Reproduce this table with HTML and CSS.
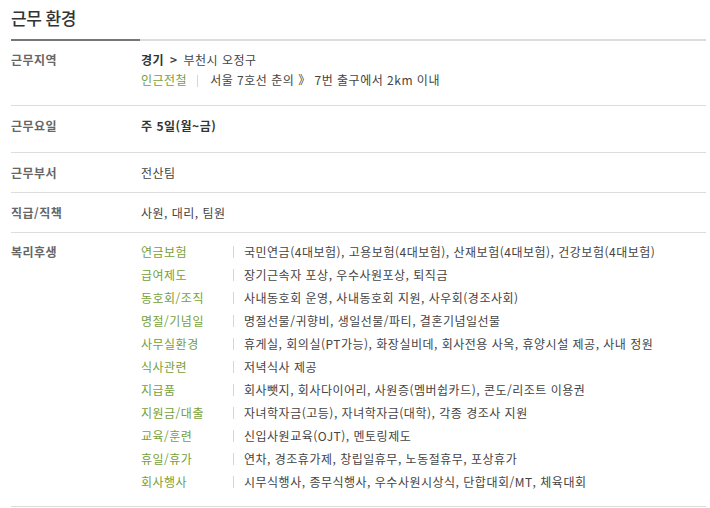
FILE: index.html
```html
<!DOCTYPE html>
<html lang="ko">
<head>
<meta charset="utf-8">
<link rel="stylesheet" href="styles.css">
</head>
<body>
<section class="env">
  <h2 class="env-title">근무 환경</h2>
  <div class="row row-tall">
    <div class="label">근무지역</div>
    <div class="value">
      <div class="line"><b class="strong">경기</b> <b class="arrow">&gt;</b> 부천시 오정구</div>
      <div class="line"><span class="green">인근전철</span><span class="bar"></span>서울 7호선 춘의 》 7번 출구에서 2km 이내</div>
    </div>
  </div>
  <div class="row row-tall2">
    <div class="label">근무요일</div>
    <div class="value"><b class="strong">주 5일(월~금)</b></div>
  </div>
  <div class="row">
    <div class="label">근무부서</div>
    <div class="value">전산팀</div>
  </div>
  <div class="row">
    <div class="label">직급/직책</div>
    <div class="value">사원, 대리, 팀원</div>
  </div>
  <div class="row row-benefit">
    <div class="label">복리후생</div>
    <dl class="benefits">
      <div class="b-item"><dt>연금보험</dt><dd>국민연금(4대보험), 고용보험(4대보험), 산재보험(4대보험), 건강보험(4대보험)</dd></div>
      <div class="b-item"><dt>급여제도</dt><dd>장기근속자 포상, 우수사원포상, 퇴직금</dd></div>
      <div class="b-item"><dt>동호회/조직</dt><dd>사내동호회 운영, 사내동호회 지원, 사우회(경조사회)</dd></div>
      <div class="b-item"><dt>명절/기념일</dt><dd>명절선물/귀향비, 생일선물/파티, 결혼기념일선물</dd></div>
      <div class="b-item"><dt>사무실환경</dt><dd>휴게실, 회의실(PT가능), 화장실비데, 회사전용 사옥, 휴양시설 제공, 사내 정원</dd></div>
      <div class="b-item"><dt>식사관련</dt><dd>저녁식사 제공</dd></div>
      <div class="b-item"><dt>지급품</dt><dd>회사뺏지, 회사다이어리, 사원증(멤버쉽카드), 콘도/리조트 이용권</dd></div>
      <div class="b-item"><dt>지원금/대출</dt><dd>자녀학자금(고등), 자녀학자금(대학), 각종 경조사 지원</dd></div>
      <div class="b-item"><dt>교육/훈련</dt><dd>신입사원교육(OJT), 멘토링제도</dd></div>
      <div class="b-item"><dt>휴일/휴가</dt><dd>연차, 경조휴가제, 창립일휴무, 노동절휴무, 포상휴가</dd></div>
      <div class="b-item"><dt>회사행사</dt><dd>시무식행사, 종무식행사, 우수사원시상식, 단합대회/MT, 체육대회</dd></div>
    </dl>
  </div>
</section>
</body>
</html>
```
FILE: styles.css
```css
* { box-sizing: border-box; }
html, body {
  margin: 0;
  padding: 0;
  background: #fff;
}
body {
  font-family: "Noto Sans CJK KR", "Noto Sans", sans-serif;
  font-size: 12px;
  color: #444;
}
.env {
  width: 695px;
  margin-left: 11px;
}
.env-title {
  margin: 0;
  height: 41px;
  padding-top: 6px;
  font-size: 17px;
  font-weight: 500;
  color: #333;
  line-height: 24px;
  letter-spacing: -0.5px;
  border-bottom: 2px solid #ddd;
  position: relative;
}
.env-title::after {
  content: "";
  position: absolute;
  left: 0;
  bottom: -2px;
  width: 129px;
  height: 2px;
  background: #767676;
}
.row {
  display: flex;
  border-bottom: 1px solid #ddd;
  padding: 9px 0 8px;
  line-height: 22px;
  letter-spacing: 0.5px;
}
.row-tall { padding: 9px 0 15px; line-height: 20px; }
.row-tall2 { padding: 9px 0 15px; }
.row-benefit { padding: 7px 0 13px; line-height: 23px; }
.label {
  width: 130px;
  flex: none;
  font-weight: 700;
  color: #666;
}
.value { color: #444; }
.strong { font-weight: 700; color: #333; }
.arrow { font-weight: 700; color: #444; margin: 0 2px; }
.green { color: #76a03a; }
.bar {
  display: inline-block;
  width: 1px;
  height: 12px;
  background: #d6d6d6;
  margin: 0 12px 0 10px;
  vertical-align: -2px;
}
.benefits { margin: 0; }
.b-item { display: flex; }
.b-item dt {
  width: 92px;
  color: #76a03a;
}
.b-item dd {
  margin: 0;
  color: #444;
  display: flex;
  align-items: center;
}
.b-item dd::before {
  content: "";
  width: 1px;
  height: 12px;
  background: #d6d6d6;
  margin-right: 10px;
  flex: none;
}
```
